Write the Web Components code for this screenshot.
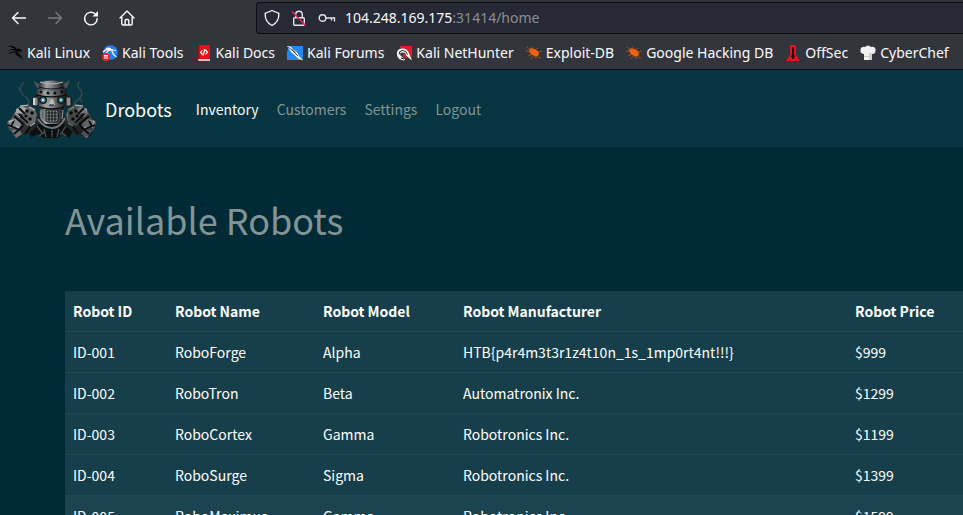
<!DOCTYPE html>
<html lang="en">
<head>
<meta charset="utf-8">
<title>Drobots</title>
<style>
  body { margin: 0; background: #002b36; overflow: hidden; }
</style>
</head>
<body>
<browser-chrome></browser-chrome>
<site-nav></site-nav>
<robot-inventory></robot-inventory>

<script>
const define = (name, html) => customElements.define(name, class extends HTMLElement {
  constructor() {
    super();
    this.attachShadow({ mode: 'open' }).innerHTML = html;
  }
});

define('book-mark', `
<style>
  :host { display: block; flex: none; }
  a { display: flex; align-items: center; gap: 4px; color: #fbfbfe; text-decoration: none; white-space: nowrap; }
  ::slotted(svg) { width: 16px; height: 16px; display: block; }
</style>
<a href="#"><slot name="icon"></slot><span><slot></slot></span></a>`);

define('browser-chrome', `
<style>
  :host { display: block; background: #33353d; color: #fbfbfe; border-bottom: 1px solid #0c0c0d; font: 14px/20px "Noto Sans", sans-serif; }
  .tools { display: flex; align-items: center; padding: 2px 0 0 10px; gap: 18px; }
  button { background: none; border: 0; padding: 0; width: 18px; height: 32px; display: grid; place-items: center; color: #fbfbfe; }
  button:disabled { color: #7b7c82; }
  svg { display: block; }
  .address { flex: 1; display: flex; align-items: center; margin-left: 102px; height: 30px; padding-left: 7px; gap: 11px; background: #272935; border: 1px solid #0c0c0d; border-right: 0; border-radius: 4px 0 0 4px; white-space: nowrap; }
  .url { color: #8d8e95; margin-left: -2px; }
  .url b { font-weight: 400; color: #fbfbfe; }
  .marks { display: flex; height: 33px; align-items: center; padding: 2px 0 0 7px; gap: 12px; }
</style>
<div class="tools">
  <button aria-label="Back"><svg width="18" height="18" viewBox="0 0 18 18" fill="none" stroke="currentColor" stroke-width="1.4" stroke-linecap="round" stroke-linejoin="round"><path d="M15.500 9H2.500M8 3.500 2.500 9 8 14.500"/></svg></button>
  <button aria-label="Forward" disabled><svg width="18" height="18" viewBox="0 0 18 18" fill="none" stroke="currentColor" stroke-width="1.4" stroke-linecap="round" stroke-linejoin="round"><path d="M2.500 9h13M10 3.500 15.500 9 10 14.500"/></svg></button>
  <button aria-label="Reload"><svg width="18" height="18" viewBox="0 0 18 18"><path d="M15.200 9.500A6.300 6.300 0 1 1 13 4.800" fill="none" stroke="currentColor" stroke-width="1.4" stroke-linecap="round"/><path d="M16 2v5.500h-5.500z" fill="currentColor"/></svg></button>
  <button aria-label="Home"><svg width="18" height="18" viewBox="0 0 18 18" fill="none" stroke="currentColor" stroke-width="1.4" stroke-linecap="round" stroke-linejoin="round"><path d="M2 9 9 2l7 7M3.800 8v6.800q0 1.200 1.200 1.200h8q1.200 0 1.200-1.200V8M7.200 16v-4.500q0-1 1-1h1.600q1 0 1 1V16"/></svg></button>
  <div class="address">
    <svg width="16" height="18" viewBox="0 0 16 18" fill="none" stroke="#fbfbfe" stroke-width="1.300" stroke-linejoin="round"><path d="M8 1.500 14 4c.6 0 .9.500.9 1 0 5-2 9-6.900 11.500C3 14 1.100 10 1.100 5c0-.5.3-1 .9-1z"/></svg>
    <svg width="16" height="18" viewBox="0 0 16 18" fill="none"><g stroke="#e2e2e6" stroke-width="1.400"><rect x="2.700" y="8.700" width="10.600" height="7.600" rx="1"/><path d="M4.700 8.500V5.500a3.300 3.300 0 0 1 6.600 0v3"/></g><path d="m1 2.500 13.500 14" stroke="#e22850" stroke-width="1.500"/></svg>
    <svg width="18" height="16" viewBox="0 0 18 16" fill="none" stroke="#e2e2e6" stroke-width="1.400"><circle cx="4.500" cy="8" r="3.300"/><path d="M8 8h8.500v3.500M13.500 8v2.500"/></svg>
    <span class="url"><b>104.248.169.175</b>:31414/home</span>
  </div>
</div>
<nav class="marks" aria-label="Bookmarks">
  <book-mark><svg slot="icon" viewBox="0 0 16 16"><path d="M0 1.500c4-1.500 8-.5 9.500 2.500l2.500-.5 3 2-1 1-3-.8-1 1c2 3 4 3 5 5.500L16 16c-1.200-4-4-4-6-5.500C8 9 8 7 8.500 5.500 6 4.500 3 5 .5 6.500 2.500 4.500 5 4 7.500 4 5 2 2.500 1.500 0 1.500z" fill="#050506"/><path d="M2 9q3-3 6-2M10 5q1 2 3 2.500" stroke="#050506" fill="none"/></svg>Kali Linux</book-mark>
  <book-mark><svg slot="icon" viewBox="0 0 16 16"><circle cx="8.500" cy="7.500" r="7.300" fill="#267cf5"/><path d="M1 7Q5 2.500 11 5l3 .5M4 9q2-5 6-3.500 0 3.500 4.500 6.500M4 4q3-2 6 1" stroke="#fff" stroke-width="1.200" fill="none"/><circle cx="4" cy="12" r="4" fill="#e5262d"/><path d="M2 10.500h4M3 10.500v3.500M5 10.500V14" stroke="#fff" fill="none"/></svg>Kali Tools</book-mark>
  <book-mark><svg slot="icon" viewBox="0 0 16 16"><path d="M3 0h11v15H2V1q0-1 1-1z" fill="#e5121b"/><path d="M2 14h12v2H3q-1 0-1-2z" fill="#d8c5c6"/><path d="M2 0h1.500v14H2z" fill="#a40a12"/><path d="M6.500 5 4.500 7.500l2 2M9.500 5l2 2-2 2.500M9 4 7 10.500" stroke="#fff" stroke-width="1.200" fill="none"/></svg>Kali Docs</book-mark>
  <book-mark><svg slot="icon" viewBox="0 0 16 16"><path d="M2 1h14v14H0V7z" fill="#2388f6"/><path d="M0 1q4 0 6 3l4 3 2 4 4 4.500-5-2-4-4-3-2.500z" fill="#fff"/><path d="m1 2 5 4 5 5M5 3.500l4 4" stroke="#22242c" stroke-width=".8" fill="none"/></svg>Kali Forums</book-mark>
  <book-mark><svg slot="icon" viewBox="0 0 16 16"><path d="M3 1h13v13z" fill="#e51a2b"/><path d="M1 10Q0 4 6 3.500q6 0 7 5l3 7-6-5q0-3-3.500-3t-2 3l4.500 4-1 1q-6-.5-7-5.500z" fill="#fff"/><path d="M3 9.500q0-4 3.500-4 4 0 5 4M5 13l3 1" stroke="#17181d" fill="none"/><path d="M6 9q3-1 4 1.500l1 3-3-1z" fill="#e51a2b"/></svg>Kali NetHunter</book-mark>
  <book-mark><svg slot="icon" viewBox="0 0 16 16"><path d="M3 4q4-2 7 1 3 1 3 4-1 4-5 2Q3 9 3 4z" fill="#f0620f"/><path d="m1 2 3 3M0 6l5 1M2 11l4-2M6 2l1 3M5 14l3-4M10 14v-3M12 12l3 1M12 7l4-1M9 5l3-2" stroke="#b9531b" stroke-width=".8" fill="none"/></svg>Exploit-DB</book-mark>
  <book-mark><svg slot="icon" viewBox="0 0 16 16"><path d="M3 4q4-2 7 1 3 1 3 4-1 4-5 2Q3 9 3 4z" fill="#f0620f"/><path d="m1 2 3 3M0 6l5 1M2 11l4-2M6 2l1 3M5 14l3-4M10 14v-3M12 12l3 1M12 7l4-1M9 5l3-2" stroke="#b9531b" stroke-width=".8" fill="none"/></svg>Google Hacking DB</book-mark>
  <book-mark><svg slot="icon" viewBox="0 0 16 16"><path d="M5 0h6v10l4 6H1l4-6z" fill="#e3151c"/><path d="M7 2h2v7l1 3H9v2H7v-2H6l1-3z" fill="#250508"/></svg>OffSec</book-mark>
  <book-mark><svg slot="icon" viewBox="0 0 16 16"><path d="M4 15V9Q0 9 .500 5 1 1 5 2q3-3 6 0 4-1 4.500 2.500Q16 9 12 9v6z" fill="#f1f1f1"/><path d="M9 8h3v7H9zM4 11h8v1H4z" fill="#cfcfcf"/></svg>CyberChef</book-mark>
</nav>`);

define('robot-logo', `
<style>:host { display: block; width: 90px; height: 60px; } svg { display: block; }</style>
<svg width="90" height="60" viewBox="0 0 90 60" role="img" aria-label="Robot">
  <defs>
    <linearGradient id="m" x1="0" x2="1"><stop offset="0" stop-color="#2a2c2d"/><stop offset=".3" stop-color="#a3a5a5"/><stop offset=".55" stop-color="#77797a"/><stop offset="1" stop-color="#141617"/></linearGradient>
    <linearGradient id="d" x1="0" y1="0" x2="1" y2="1"><stop offset="0" stop-color="#8d9090"/><stop offset=".45" stop-color="#3d4041"/><stop offset="1" stop-color="#090b0c"/></linearGradient>
  </defs>
  <g fill="none" stroke="#36464b" stroke-width="1.500" stroke-linecap="round"><path d="M18 3q-5 5-3 10 2 4 6 6 3 4 1 8M15 13l-2-4M73 3q-3 4 1 7 4 5-1 10-4 2-5 6M74 20l2 3"/></g>
  <path d="m27 2 7 3 1 3-4 1zM64 1l-7 4-1 3 5 1z" fill="#4c5051"/>
  <path d="m30 36 10 9h11l10-9 7 14-5 9-6-4-5 4H37l-5-4-7 3-3-8z" fill="#0c0f10"/>
  <g id="arm">
    <path d="m29 29-7-3-8 1-5 6-4 7-4 3 2 8 4 3 2 5h5l2-4 5 1 7-6 6-5z" fill="url(#d)"/>
    <path d="m19 28 8 1 4 6-2 9-8 3-5-7z" fill="#65696a"/>
    <path d="m10 30 6-3 5 3-3 5-8-1z" fill="#a3a6a6"/>
    <path d="m2 42 8-3 6 5-3 6-9-1z" fill="#848888"/>
    <path d="m5 51 8-1 3 5-6 4z" fill="#6e7273"/>
    <path d="m2 46 12 5M8 37l10 9M8 55l9-8M13 35l9 9M13 29l6 6M5 48l3-7M19 55l5-7" stroke="#090b0c" stroke-width="1.800"/>
    <path d="m3 43 5-2M14 27l8-1M9 34l5 4M23 28l6 3M10 47l3 2M24 47l5-3" stroke="#c2c6c6"/>
    <g fill="#060809"><circle cx="21" cy="32" r="1.800"/><circle cx="26" cy="34" r="1.800"/><circle cx="20" cy="37" r="1.600"/><circle cx="24" cy="40" r="1.800"/></g>
  </g>
  <g transform="matrix(-1 0 0 1 91 0)"><use href="#arm"/><path d="m29 29-15-2-10 14 2 16h10l13-12z" fill="#050708" opacity=".3"/></g>
  <path d="M32 40q6 9 14 9t13-10" fill="none" stroke="#747879" stroke-width="2"/>
  <path d="m31 47 6 8M38 50l2 8M46 51v7M53 50l-2 8M60 47l-6 9M33 57l5-4M60 57l-5-4" stroke="#4d5152" stroke-width="1.300"/>
  <path d="M34 3q11-3 23 0l1 7q-12 3-25 0z" fill="url(#m)"/><path d="M34 3q11 4 23 0" fill="none" stroke="#b4b7b7"/><path d="M33 8q12 4 25 0" fill="none" stroke="#101213"/>
  <path d="M31 10q15 3 29 0l1 6q-15 4-31 0z" fill="url(#m)"/><path d="M30 16q15 4 31 0" fill="none" stroke="#0c0e0f" stroke-width="1.500"/>
  <g fill="#0a0c0d"><circle cx="35" cy="13" r="1.400"/><circle cx="42" cy="14" r="1.600"/><circle cx="49" cy="14" r="1.600"/><circle cx="56" cy="13" r="1.400"/></g>
  <path d="M31 17q14 3 29 0l-1 11q-13 4-27 0z" fill="url(#m)"/>
  <path d="M27 18h5v9h-5zM60 18h5v9h-5z" fill="#8b8e8f" stroke="#101213"/><path d="M27 19h2v7h-2z" fill="#d3d5d5"/>
  <circle cx="37" cy="21" r="4" fill="#151a1c"/><circle cx="55" cy="21" r="4" fill="#151a1c"/>
  <circle cx="37" cy="21" r="2.500" fill="#4f8992"/><circle cx="55" cy="21" r="2.500" fill="#3d7788"/><circle cx="37" cy="21" r="1.200" fill="#b5f0f2"/><circle cx="55" cy="21" r="1.200" fill="#9fe4ee"/>
  <path d="m45 20-3 6h7l-2-6z" fill="#b9bcbc"/><path d="M43 26h5" stroke="#141617"/>
  <path d="M33 28q13 4 25 0l-1 12-5 5H39l-5-5z" fill="url(#m)"/><path d="M33 28q13 4 25 0" fill="none" stroke="#0d0f10" stroke-width="1.500"/>
  <path d="M40 31h12v11l-2 1h-8l-2-1z" fill="#898c8d" stroke="#101213"/>
  <path d="M41 34h10M41 37h10M41 40h10M43 32v10M46 32v10M49 32v10" stroke="#151718" stroke-width="1.200"/>
  <path d="M35 31v8l4 5M57 31l-1 9" fill="none" stroke="#c1c4c4" stroke-width=".8"/>
</svg>`);

define('site-nav', `
<style>
  :host { display: block; background: #073642; font: 14px/24px "Noto Sans CJK SC", "Noto Sans CJK JP", sans-serif; }
  nav { display: flex; align-items: center; padding: 8px 6px; height: 61px; }
  a { color: #839496; text-decoration: none; }
  .brand { display: flex; align-items: center; gap: 9px; color: #fff; font-size: 18px; line-height: 30px; margin-right: 24px; }
  .links { display: flex; gap: 18px; }
  .links [aria-current] { color: #fff; }
</style>
<nav aria-label="Main">
  <a class="brand" href="#"><robot-logo></robot-logo>Drobots</a>
  <div class="links"><a href="#" aria-current="page">Inventory</a><a href="#">Customers</a><a href="#">Settings</a><a href="#">Logout</a></div>
</nav>`);

const robots = [
  ['ID-001', 'RoboForge', 'Alpha', 'HTB{p4r4m3t3r1z4t10n_1s_1mp0rt4nt!!!}', '$999'],
  ['ID-002', 'RoboTron', 'Beta', 'Automatronix Inc.', '$1299'],
  ['ID-003', 'RoboCortex', 'Gamma', 'Robotronics Inc.', '$1199'],
  ['ID-004', 'RoboSurge', 'Sigma', 'Robotronics Inc.', '$1399'],
  ['ID-005', 'RoboMaximus', 'Gamma', 'Robotronics Inc.', '$1599'],
];
define('robot-inventory', `
<style>
  :host { display: block; padding: 48px 0 0 65px; font: 14px/24px "Noto Sans CJK SC", "Noto Sans CJK JP", sans-serif; }
  h1 { margin: 0 0 48px; font-size: 36px; line-height: 48px; font-weight: 400; color: #839496; }
  table { width: 100%; border-collapse: separate; border-spacing: 0; table-layout: fixed; color: #fff; background: #173f4b; }
  th, td { text-align: left; padding: 8px; border-bottom: 1px solid #214955; white-space: nowrap; }
  tr:last-child td { background: #1c4450; }
  thead th { background: #173f4b; }
</style>
<h1>Available Robots</h1>
<table>
  <colgroup><col style="width:102px"><col style="width:148px"><col style="width:140px"><col style="width:392px"><col></colgroup>
  <thead><tr>${['ID', 'Name', 'Model', 'Manufacturer', 'Price'].map(h => `<th scope="col">Robot ${h}</th>`).join('')}</tr></thead>
  <tbody>${robots.map(r => `<tr>${r.map(c => `<td>${c}</td>`).join('')}</tr>`).join('')}</tbody>
</table>`);
</script>
</body>
</html>
